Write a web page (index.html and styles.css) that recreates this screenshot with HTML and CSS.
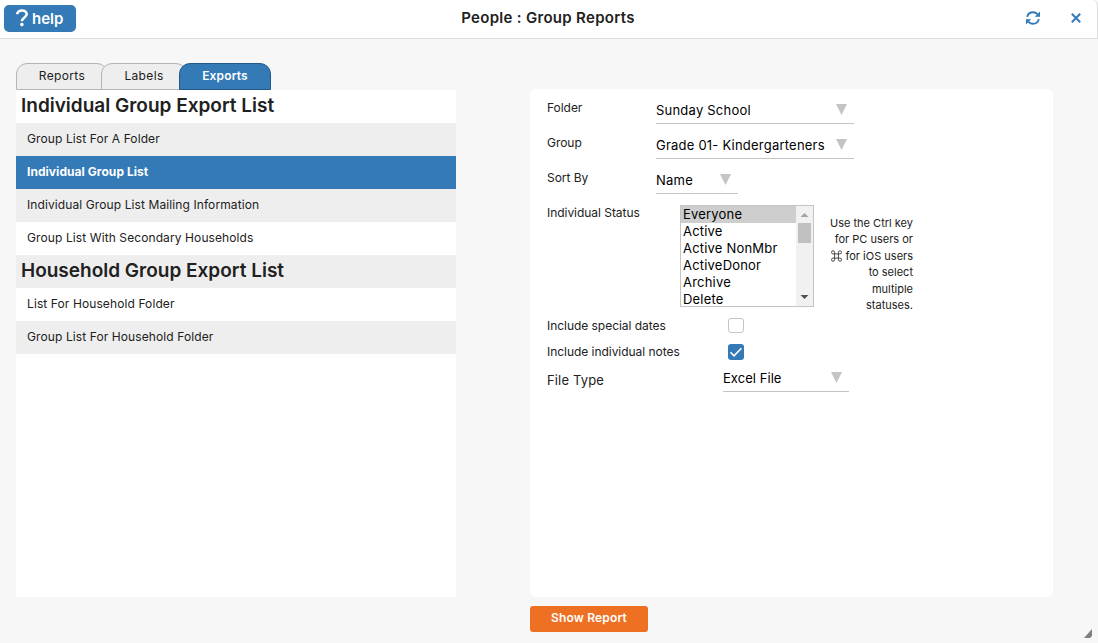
FILE: index.html
```html
<!DOCTYPE html>
<html lang="en">
<head>
    <meta charset="UTF-8">
    <meta name="viewport" content="width=device-width, initial-scale=1.0">
    <title>People : Group Reports</title>
    <link rel="stylesheet" href="styles.css">
</head>
<body>

<div class="dialog">
    <header class="titlebar">
        <button type="button" class="help">
            <svg width="14" height="18" viewBox="0 0 14 18"><path d="M2 5.2C2.6 2.8 4.4 1.4 6.9 1.4c2.8 0 4.8 1.6 4.8 3.9 0 3.2-4.8 3.3-4.8 7" fill="none" stroke="#fff" stroke-width="2.5"/><circle cx="6.9" cy="15.6" r="1.8" fill="#fff"/></svg>
            <span>help</span>
        </button>
        <h1>People : Group Reports</h1>
        <div class="tools">
            <svg class="refresh" width="14" height="14" viewBox="0 0 14 14">
                <path d="M1.2 5.9C1.8 3.2 4.2 1.2 7 1.2c1.8 0 3.3.7 4.5 2M12.8 8.1c-.6 2.7-3 4.7-5.8 4.7-1.8 0-3.3-.7-4.5-2" fill="none" stroke="#337ab7" stroke-width="1.9"/>
                <path d="M14 .6v5.2H8.8zM0 13.4V8.2h5.2z" fill="#337ab7"/>
            </svg>
            <svg class="close" width="10" height="10" viewBox="0 0 10 10"><path d="M.8.8l8.4 8.4M9.2.8L.8 9.2" stroke="#337ab7" stroke-width="2"/></svg>
        </div>
    </header>

    <main class="content">
        <section class="left">
            <nav class="tabs">
                <a class="tab reports">Reports</a>
                <a class="tab labels">Labels</a>
                <a class="tab active">Exports</a>
            </nav>
            <ul class="report-list">
                <li class="heading">Individual Group Export List</li>
                <li>Group List For A Folder</li>
                <li class="selected">Individual Group List</li>
                <li>Individual Group List Mailing Information</li>
                <li>Group List With Secondary Households</li>
                <li class="heading">Household Group Export List</li>
                <li>List For Household Folder</li>
                <li>Group List For Household Folder</li>
            </ul>
        </section>

        <section class="right">
            <form class="options">
                <div class="row">
                    <label>Folder</label>
                    <div class="dropdown wide">Sunday School<span class="arrow"></span></div>
                </div>
                <div class="row">
                    <label>Group</label>
                    <div class="dropdown wide">Grade 01- Kindergarteners<span class="arrow"></span></div>
                </div>
                <div class="row">
                    <label>Sort By</label>
                    <div class="dropdown narrow">Name<span class="arrow"></span></div>
                </div>
                <div class="row status">
                    <label>Individual Status</label>
                    <div class="listbox">
                        <ul>
                            <li class="chosen">Everyone</li>
                            <li>Active</li>
                            <li>Active NonMbr</li>
                            <li>ActiveDonor</li>
                            <li>Archive</li>
                            <li>Delete</li>
                        </ul>
                        <div class="scrollbar">
                            <svg width="17" height="17" viewBox="0 0 17 17"><path d="M4.500 11h8l-4-4z" fill="#a3a3a3"/></svg>
                            <div class="thumb"></div>
                            <svg width="17" height="17" viewBox="0 0 17 17"><path d="M4.500 6h8l-4 4z" fill="#505050"/></svg>
                        </div>
                    </div>
                    <p class="hint">Use the Ctrl key for PC users or <svg width="11" height="12" viewBox="0 0 11 12"><path d="M3.600 3.900V2.300a1.550 1.550 0 1 0-1.550 1.600h6.900A1.550 1.550 0 1 0 7.400 2.300v7.400a1.550 1.550 0 1 0 1.550-1.600h-6.900A1.550 1.550 0 1 0 3.600 9.700z" fill="none" stroke="#212121" stroke-width=".8"/></svg> for iOS users to select multiple statuses.</p>
                </div>
                <div class="row check">
                    <label>Include special dates</label>
                    <span class="box"></span>
                </div>
                <div class="row check">
                    <label>Include individual notes</label>
                    <span class="box checked"><svg width="16" height="16" viewBox="0 0 16 16"><path d="M2.500 8.300l3.500 3.500 7.400-7.600" fill="none" stroke="#fff" stroke-width="1.600"/></svg></span>
                </div>
                <div class="row filetype">
                    <label>File Type</label>
                    <div class="dropdown">Excel File<span class="arrow"></span></div>
                </div>
            </form>
            <button type="button" class="show">Show Report</button>
        </section>
    </main>
    <svg class="grip" width="8" height="9" viewBox="0 0 8 9"><path d="M8 0v7L6 9H0z" fill="#808080"/></svg>
</div>

</body>
</html>
```
FILE: styles.css
```css
* {
    box-sizing: border-box;
}
body {
    margin: 0;
    font-family: Inter, sans-serif;
    font-size: 12px;
    letter-spacing: 0.1px;
    color: #212121;
    background-color: #f7f7f7;
}
ul, p, h1 {
    margin: 0;
    padding: 0;
    list-style: none;
}
svg {
    display: block;
}
button {
    border: none;
    font-family: inherit;
    color: #fff;
}
.dialog {
    position: relative;
    height: 643px;
    overflow: hidden;
}
.titlebar {
    display: grid;
    grid-template-columns: 1fr auto 1fr;
    align-items: center;
    height: 39px;
    padding: 0 16px 0 4px;
    background-color: #fff;
    border-bottom: 1px solid #dcdcdc;
    border-right: 1px solid #dcdcdc;
    border-top-right-radius: 6px;
}
.help {
    display: flex;
    align-items: center;
    gap: 3px;
    width: 72px;
    height: 27px;
    margin-bottom: 2px;
    padding: 0 0 0 11px;
    border-radius: 5px;
    background-color: #337ab7;
    font-size: 15px;
    font-weight: 600;
}
h1 {
    font-size: 15px;
    font-weight: 600;
    line-height: 20px;
    letter-spacing: 0.3px;
    padding: 0 0 3px 11px;
}
.tools {
    display: flex;
    align-items: center;
    justify-content: flex-end;
    gap: 31px;
    padding-bottom: 3px;
}
.content {
    display: flex;
    gap: 74px;
    padding: 24px 16px 0;
}
.left {
    width: 440px;
}
.tabs {
    display: flex;
    height: 27px;
}
.tab {
    width: 92px;
    height: 27px;
    border: 1px solid #b5b5b5;
    border-radius: 11px 11px 0 0;
    background-color: #eee;
    line-height: 24px;
    text-align: center;
    letter-spacing: 0.35px;
}
.labels {
    width: 86px;
    margin-left: -7px;
}
.tab.active {
    margin-left: -8px;
    background-color: #337ab7;
    border-color: #22598a;
    color: #fff;
    font-weight: 600;
    letter-spacing: 0.15px;
}
.report-list {
    height: 507px;
    background-color: #fff;
}
.report-list li {
    height: 33px;
    padding-left: 11px;
    line-height: 32px;
}
.report-list li:nth-child(even) {
    background-color: #eee;
}
.report-list .heading {
    padding-left: 5px;
    font-size: 19px;
    font-weight: 600;
    line-height: 31px;
    letter-spacing: 0;
}
.report-list .selected {
    background-color: #337ab7;
    color: #fff;
    font-weight: 700;
    letter-spacing: 0.05px;
}
.right {
    width: 523px;
    padding-top: 26px;
}
.options {
    height: 508px;
    padding: 11px 17px 0;
    border-radius: 6px;
    background-color: #fff;
}
.row {
    display: flex;
    height: 35px;
}
.row label {
    width: 109px;
    line-height: 16px;
    letter-spacing: -0.04px;
    white-space: nowrap;
}
.dropdown {
    display: flex;
    justify-content: space-between;
    height: 24px;
    padding-right: 7px;
    border-bottom: 1px solid #c4c4c4;
    color: #000;
    font-size: 13px;
    line-height: 21px;
    letter-spacing: 0.22px;
    white-space: nowrap;
}
.wide {
    width: 198px;
}
.narrow {
    width: 82px;
}
.arrow {
    margin-top: 4px;
    width: 11px;
    height: 11px;
    background-color: #c4c4c4;
    clip-path: polygon(0 0, 100% 0, 50% 100%);
}
.status {
    height: 113px;
}
.status label {
    width: 133px;
}
.listbox {
    display: flex;
    width: 134px;
    height: 102px;
    border: 1px solid #c4c4c4;
    overflow: hidden;
}
.listbox ul {
    flex: 1;
    color: #000;
    font-size: 13px;
    line-height: 17px;
    letter-spacing: 0.2px;
}
.listbox li {
    height: 17px;
    padding-left: 2px;
    white-space: nowrap;
}
.listbox .chosen {
    background-color: #cecece;
}
.scrollbar {
    display: flex;
    flex-direction: column;
    width: 17px;
    background-color: #f1f1f1;
}
.thumb {
    width: 13px;
    height: 20px;
    margin: 0 2px auto;
    background-color: #c1c1c1;
}
.hint {
    width: 88px;
    margin-left: 11px;
    padding-top: 10px;
    font-size: 11px;
    line-height: 16.4px;
    letter-spacing: 0;
    text-align: right;
}
.hint svg {
    display: inline-block;
    vertical-align: -2px;
}
.check {
    height: 26px;
}
.check label {
    width: 181px;
}
.box {
    width: 16px;
    height: 15px;
    border: 1px solid #c4c4c4;
    border-radius: 3px;
}
.box.checked {
    height: 16px;
    border: none;
    background-color: #337ab7;
}
.filetype label {
    width: 176px;
    padding-top: 1px;
    font-size: 13px;
    line-height: 19px;
    letter-spacing: 0.15px;
}
.filetype .dropdown {
    width: 126px;
    height: 22px;
    line-height: 17px;
    letter-spacing: 0.05px;
}
.filetype .arrow {
    margin-top: 2px;
}
.show {
    display: block;
    width: 118px;
    height: 26px;
    margin-top: 9px;
    padding: 0 0 3px;
    border-radius: 3px;
    background-color: #ee7023;
    font-size: 12px;
    font-weight: 600;
    letter-spacing: 0.15px;
}
.grip {
    position: absolute;
    right: 6px;
    bottom: 5px;
}
```
